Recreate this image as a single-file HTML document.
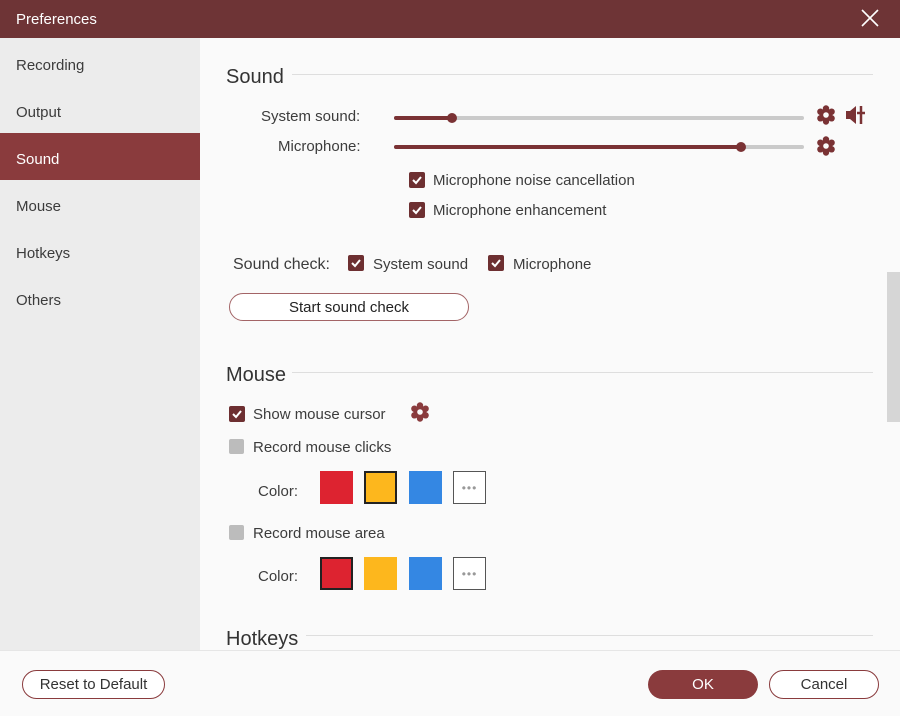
<!DOCTYPE html>
<html><head><meta charset="utf-8"><style>
*{margin:0;padding:0;box-sizing:border-box}
body{width:900px;height:716px;overflow:hidden;font-family:"Liberation Sans",sans-serif;background:#fafafa;position:relative;color:#333}
.a{position:absolute}
.t{font-size:15px;color:#3c3c3c;white-space:nowrap;margin-top:2px}
.cb{position:absolute;width:16px;height:16px;border-radius:2px;background:#6d2f31;margin-top:2px}
.cb svg{position:absolute;left:2px;top:2px}
.cbg{position:absolute;width:15px;height:15px;border-radius:2px;background:#bcbcbc;margin-top:2px}
.sw{position:absolute;width:33px;height:33px}
.sec{font-size:20px;color:#333;margin-top:2px}
.line{position:absolute;height:1px;background:#dedede}
.btn{display:flex;align-items:center;justify-content:center;font-size:15px}
.dots{border:1px solid #555;background:#fff;display:flex;align-items:center;justify-content:center;color:#999;font-size:12px;letter-spacing:1px}
</style></head><body>
<div class="a" style="left:0;top:0;width:900px;height:38px;background:#6e3436"></div>
<div class="a t" style="left:16px;top:9px;color:#fff;font-size:15px">Preferences</div>
<svg class="a" style="left:861px;top:9px" width="18" height="18"><path d="M1 1L17 17M17 1L1 17" stroke="#fff" stroke-width="1.6"/></svg>
<div class="a" style="left:0;top:38px;width:200px;height:612px;background:#ececec"></div>
<div class="a t" style="left:16px;top:55px;font-size:15px">Recording</div>
<div class="a t" style="left:16px;top:102px">Output</div>
<div class="a" style="left:0;top:133px;width:200px;height:47px;background:#8a3b3d"></div>
<div class="a t" style="left:16px;top:149px;color:#fff">Sound</div>
<div class="a t" style="left:16px;top:196px">Mouse</div>
<div class="a t" style="left:16px;top:243px">Hotkeys</div>
<div class="a t" style="left:16px;top:290px">Others</div>
<div class="a" style="left:887px;top:272px;width:13px;height:150px;background:#d6d6d6"></div>

<div class="a sec" style="left:226px;top:64px">Sound</div>
<div class="line" style="left:292px;top:74px;width:581px"></div>
<div class="a t" style="left:261px;top:106px">System sound:</div>
<div class="a t" style="left:278px;top:136px">Microphone:</div>
<div class="a" style="left:394px;top:116px;width:410px;height:4px;background:#cacaca;border-radius:2px"></div>
<div class="a" style="left:394px;top:116px;width:58px;height:4px;background:#7a3234;border-radius:2px"></div>
<div class="a" style="left:447px;top:113px;width:10px;height:10px;border-radius:50%;background:#7a3234"></div>
<div class="a" style="left:394px;top:145px;width:410px;height:4px;background:#cacaca;border-radius:2px"></div>
<div class="a" style="left:394px;top:145px;width:346px;height:4px;background:#7a3234;border-radius:2px"></div>
<div class="a" style="left:736px;top:142px;width:10px;height:10px;border-radius:50%;background:#7a3234"></div>
<svg class="a" style="left:816px;top:105px" width="20" height="20" viewBox="0 0 20 20"><g fill="#7a3234"><circle cx="10" cy="10" r="6.5"/><circle cx="10" cy="3.5" r="3.2"/><circle cx="10" cy="16.5" r="3.2"/><circle cx="4.4" cy="6.7" r="3.2"/><circle cx="15.6" cy="6.7" r="3.2"/><circle cx="4.4" cy="13.3" r="3.2"/><circle cx="15.6" cy="13.3" r="3.2"/></g><circle cx="10" cy="10" r="2.8" fill="#fafafa"/></svg>
<svg class="a" style="left:816px;top:136px" width="20" height="20" viewBox="0 0 20 20"><g fill="#7a3234"><circle cx="10" cy="10" r="6.5"/><circle cx="10" cy="3.5" r="3.2"/><circle cx="10" cy="16.5" r="3.2"/><circle cx="4.4" cy="6.7" r="3.2"/><circle cx="15.6" cy="6.7" r="3.2"/><circle cx="4.4" cy="13.3" r="3.2"/><circle cx="15.6" cy="13.3" r="3.2"/></g><circle cx="10" cy="10" r="2.8" fill="#fafafa"/></svg>
<svg class="a" style="left:845px;top:105px" width="22" height="20" viewBox="0 0 22 20"><path d="M1 6H5L11 1V19L5 14H1Z" fill="#7a3234"/><path d="M16 1V19M12 8H20" stroke="#7a3234" stroke-width="2.5"/></svg>

<div class="cb" style="left:409px;top:170px"><svg width="12" height="12"><path d="M2 6L5 9L10 3" stroke="#fff" stroke-width="2" fill="none"/></svg></div>
<div class="a t" style="left:433px;top:170px">Microphone noise cancellation</div>
<div class="cb" style="left:409px;top:200px"><svg width="12" height="12"><path d="M2 6L5 9L10 3" stroke="#fff" stroke-width="2" fill="none"/></svg></div>
<div class="a t" style="left:433px;top:200px">Microphone enhancement</div>

<div class="a t" style="left:233px;top:254px;font-size:16px">Sound check:</div>
<div class="cb" style="left:348px;top:253px"><svg width="12" height="12"><path d="M2 6L5 9L10 3" stroke="#fff" stroke-width="2" fill="none"/></svg></div>
<div class="a t" style="left:373px;top:254px">System sound</div>
<div class="cb" style="left:488px;top:253px"><svg width="12" height="12"><path d="M2 6L5 9L10 3" stroke="#fff" stroke-width="2" fill="none"/></svg></div>
<div class="a t" style="left:513px;top:254px">Microphone</div>
<div class="a btn" style="left:229px;top:293px;width:240px;height:28px;border:1.5px solid #a36466;border-radius:14px;background:#fff;color:#222">Start sound check</div>

<div class="a sec" style="left:226px;top:362px">Mouse</div>
<div class="line" style="left:292px;top:372px;width:581px"></div>
<div class="cb" style="left:229px;top:404px"><svg width="12" height="12"><path d="M2 6L5 9L10 3" stroke="#fff" stroke-width="2" fill="none"/></svg></div>
<div class="a t" style="left:253px;top:404px">Show mouse cursor</div>
<svg class="a" style="left:410px;top:402px" width="20" height="20" viewBox="0 0 20 20"><g fill="#8a3b3d"><circle cx="10" cy="10" r="6.5"/><circle cx="10" cy="3.5" r="3.2"/><circle cx="10" cy="16.5" r="3.2"/><circle cx="4.4" cy="6.7" r="3.2"/><circle cx="15.6" cy="6.7" r="3.2"/><circle cx="4.4" cy="13.3" r="3.2"/><circle cx="15.6" cy="13.3" r="3.2"/></g><circle cx="10" cy="10" r="2.8" fill="#fafafa"/></svg>
<div class="cbg" style="left:229px;top:437px"></div>
<div class="a t" style="left:253px;top:437px">Record mouse clicks</div>
<div class="a t" style="left:258px;top:481px">Color:</div>
<div class="sw" style="left:320px;top:471px;background:#dd2330"></div>
<div class="sw" style="left:364px;top:471px;background:#fdb71d;border:2px solid #222"></div>
<div class="sw" style="left:409px;top:471px;background:#3487e3"></div>
<div class="sw dots" style="left:453px;top:471px">•••</div>
<div class="cbg" style="left:229px;top:523px"></div>
<div class="a t" style="left:253px;top:523px">Record mouse area</div>
<div class="a t" style="left:258px;top:566px">Color:</div>
<div class="sw" style="left:320px;top:557px;background:#dd2330;border:2px solid #222"></div>
<div class="sw" style="left:364px;top:557px;background:#fdb71d"></div>
<div class="sw" style="left:409px;top:557px;background:#3487e3"></div>
<div class="sw dots" style="left:453px;top:557px">•••</div>

<div class="a sec" style="left:226px;top:626px">Hotkeys</div>
<div class="line" style="left:306px;top:635px;width:567px"></div>

<div class="a" style="left:0;top:650px;width:900px;height:66px;background:#fafafa;border-top:1px solid #e6e6e6"></div>
<div class="a btn" style="left:22px;top:670px;width:143px;height:29px;border:1.5px solid #8a3b3d;border-radius:15px;background:#fff;color:#333">Reset to Default</div>
<div class="a btn" style="left:648px;top:670px;width:110px;height:29px;border-radius:15px;background:#8a3b3d;color:#fff">OK</div>
<div class="a btn" style="left:769px;top:670px;width:110px;height:29px;border:1.5px solid #8a3b3d;border-radius:15px;background:#fff;color:#333">Cancel</div>
</body></html>
